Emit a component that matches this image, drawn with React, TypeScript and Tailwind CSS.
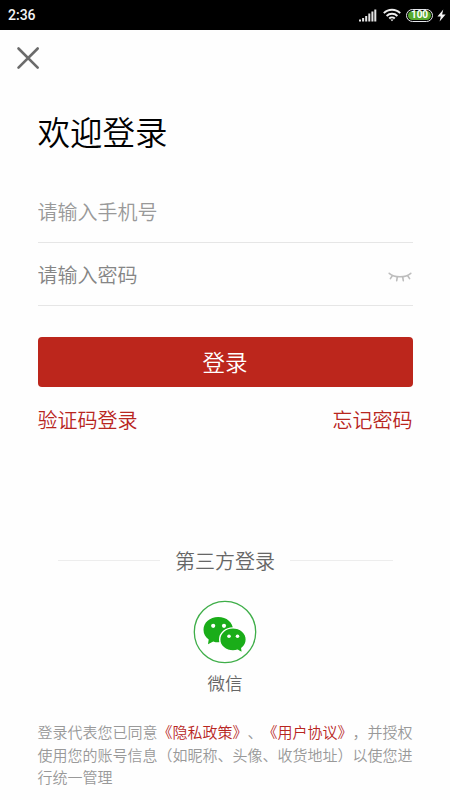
import React, { useState } from "react";

const StatusBar = () => (
  <div className="flex h-[30px] shrink-0 items-center bg-black pl-2 pr-1 text-white">
    <span className="font-[Roboto,sans-serif] text-sm font-medium leading-none text-gray-100">
      2:36
    </span>
    <div className="ml-auto flex items-center">
      <svg width="18" height="13" viewBox="0 0 18 13" fill="#e5e5e5">
        <rect x="0" y="10.5" width="2" height="2" />
        <rect x="3.1" y="9" width="2" height="3.5" />
        <rect x="6.2" y="7" width="2" height="5.5" />
        <rect x="9.3" y="4.5" width="2" height="8" />
        <rect x="12.4" y="2.5" width="2" height="10" />
        <rect x="15.3" y="0.5" width="2" height="12" />
      </svg>
      <svg
        className="ml-1.5"
        width="18"
        height="14"
        viewBox="0 0 18 14"
        fill="none"
        stroke="#eeeeee"
        strokeWidth="1.9"
      >
        <path d="M0.8 5.2a11.6 11.6 0 0 1 16.4 0" />
        <path d="M3.6 8a7.7 7.7 0 0 1 10.8 0" />
        <path d="M6.2 10.5a4 4 0 0 1 5.6 0" />
        <path d="M7.4 11.5h3.2L9 13.3z" fill="#eeeeee" stroke="none" />
      </svg>
      <div className="ml-[5px] flex h-[13px] w-[27px] items-center justify-center rounded-full border border-gray-200 p-px">
        <span className="flex h-full w-full items-center justify-center rounded-full bg-[#56a92d] font-[Roboto,sans-serif] text-[10px] font-bold leading-none text-white">
          100
        </span>
      </div>
      <svg
        className="ml-1"
        width="9"
        height="13"
        viewBox="0 0 9 13"
        fill="#f3f3f3"
      >
        <path d="M6.3 0.5 0.4 7.4h3.4L2.6 12.6 8.6 5.4H5.1z" />
      </svg>
    </div>
  </div>
);

const ClosedEye = () => (
  <svg
    width="24"
    height="10"
    viewBox="0 0 24 10"
    fill="none"
    stroke="#bdbdbd"
    strokeWidth="1.6"
    strokeLinecap="round"
  >
    <path d="M1.2 1.3C6.5 5.9 17.5 5.9 22.8 1.3" />
    <path d="M4.3 3.8 2.4 6.6M9.3 5 8.7 8.6M14.7 5l.6 3.6M19.7 3.8l1.9 2.8" />
  </svg>
);

const WechatLogo = () => (
  <svg width="64" height="64" viewBox="0 0 64 64">
    <circle
      cx="32"
      cy="32"
      r="30.7"
      fill="#fff"
      stroke="#3fae49"
      strokeWidth="1.3"
    />
    <g fill="#1aad19">
      <path d="M25.2 17c-8.400 0-14.700 5.600-14.700 12.800 0 4 1.900 7.400 5.200 9.800l-.7 4.600 5.200-2.800c1.600.6 3.200.9 5 .9 8.400 0 14.800-5.600 14.800-12.700S33.600 17 25.200 17z" />
      <path
        d="M40 27.900c-7.400 0-13.300 5.100-13.300 11.500S32.600 50.900 40 50.900c1.600 0 3.200-.2 4.600-.7l4.900 3-.7-5c2.800-2.200 4.500-5.200 4.500-8.800 0-6.400-5.900-11.500-13.300-11.500z"
        stroke="#fff"
        strokeWidth="1.4"
      />
    </g>
    <g fill="#fff">
      <circle cx="20.200" cy="25.800" r="2.100" />
      <circle cx="31" cy="25.800" r="2.100" />
      <circle cx="36" cy="36.300" r="1.800" />
      <circle cx="44.500" cy="36.300" r="1.800" />
    </g>
  </svg>
);

const App = () => {
  const [phone, setPhone] = useState("");
  const [password, setPassword] = useState("");
  const [showPassword, setShowPassword] = useState(false);

  return (
    <div className="flex h-[800px] w-[450px] flex-col overflow-hidden bg-[#fefefe] font-['Noto_Sans_CJK_SC',sans-serif] font-[350]">
      <StatusBar />

      <button className="ml-4 mt-4 h-6 w-6 shrink-0" aria-label="关闭">
        <svg
          width="24"
          height="24"
          viewBox="0 0 24 24"
          stroke="#6b6b6b"
          strokeWidth="2.6"
          strokeLinecap="round"
        >
          <path d="M2.5 2.5 21.7 21.7M21.7 2.5 2.5 21.7" />
        </svg>
      </button>

      <main className="flex shrink-0 flex-col px-[37.5px]">
        <h1 className="mt-[37px] text-[32.5px] leading-[48px] text-black">
          欢迎登录
        </h1>

        <div className="mt-[25px] flex h-[63px] items-center border-b border-[#e6e6e6] pt-0.5">
          <input
            type="tel"
            value={phone}
            onChange={(e) => setPhone(e.target.value)}
            placeholder="请输入手机号"
            className="w-full text-xl outline-none placeholder:text-[#999999]"
          />
        </div>
        <div className="flex h-[63px] items-center border-b border-[#e6e6e6] pt-0.5">
          <input
            type={showPassword ? "text" : "password"}
            value={password}
            onChange={(e) => setPassword(e.target.value)}
            placeholder="请输入密码"
            className="min-w-0 flex-1 text-xl outline-none placeholder:text-[#858585]"
          />
          <button
            className="mr-px mt-1"
            onClick={() => setShowPassword(!showPassword)}
            aria-label="显示密码"
          >
            <ClosedEye />
          </button>
        </div>

        <button className="mt-[31px] h-[50px] rounded-[4px] bg-[#bc261c] text-[22.5px] text-white">
          登录
        </button>

        <div className="mt-[18px] flex justify-between text-xl leading-[30px] text-[#b8261e]">
          <button>验证码登录</button>
          <button>忘记密码</button>
        </div>

        <div className="mt-[111px] flex items-center gap-[15px] px-5">
          <span className="mb-0.5 h-px flex-1 bg-[#ededed]" />
          <span className="text-xl leading-[30px] text-[#666666]">
            第三方登录
          </span>
          <span className="mb-0.5 h-px flex-1 bg-[#ededed]" />
        </div>

        <button className="mt-6 flex flex-col items-center self-center">
          <WechatLogo />
          <span className="mt-[6px] text-[17.5px] leading-[26px] text-[#666666]">
            微信
          </span>
        </button>

        <p className="mt-[25px] whitespace-nowrap text-[15px] leading-[22.5px] text-[#999999] [text-spacing-trim:space-all]">
          登录代表您已同意<span className="text-[#b8261e]">《隐私政策》</span>、
          <span className="text-[#b8261e]">《用户协议》</span>，并授权
          <br />
          使用您的账号信息（如昵称、头像、收货地址）以使您进
          <br />
          行统一管理
        </p>
      </main>
    </div>
  );
};

export default App;
